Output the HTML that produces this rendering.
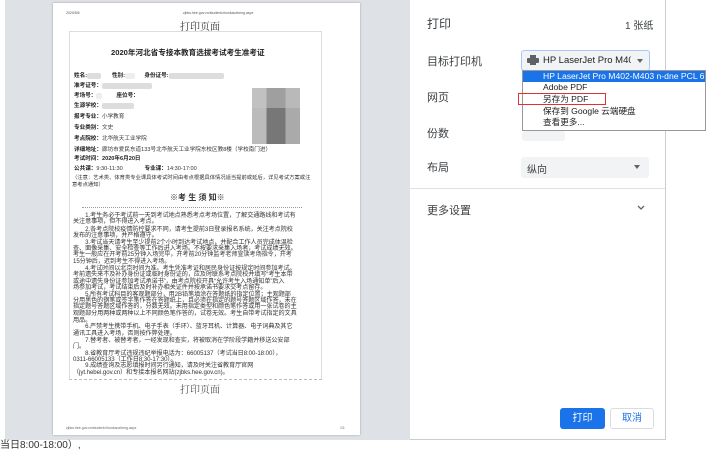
<!DOCTYPE html>
<html><head><meta charset="utf-8"><style>
*{margin:0;padding:0;box-sizing:border-box}
body{width:720px;height:445px;overflow:hidden;background:#fff;position:relative;font-family:"Liberation Sans","Noto Sans CJK SC",sans-serif;color:#202124}
.a{position:absolute;white-space:nowrap}
#gray{left:5px;top:0;width:405px;height:440px;background:#dee1e6}
#page{left:53px;top:3px;width:307px;height:432px;background:#fff;box-shadow:0 0 2px rgba(0,0,0,.3)}
.doc{font-family:"Liberation Serif","Noto Serif CJK SC",serif}
.l{position:absolute;left:73px;font-size:6.1px;line-height:6.5px;color:#333;white-space:nowrap;letter-spacing:-0.05px}
.f{position:absolute;left:74px;font-size:5.6px;color:#333;white-space:nowrap}
.f b{color:#222}
.blur{display:inline-block;background:#ddd;height:6px;vertical-align:middle;border-radius:2px}
#panel{left:410px;top:0;width:256px;height:440px;background:#fff;border-right:1px solid #ccc;border-bottom:1px solid #ccc}
.lab{position:absolute;left:427px;font-size:11px;color:#3c4043}
.sel{position:absolute;background:#f1f3f4;border-radius:3px}
.it{position:absolute;left:543px;font-size:8.6px;line-height:11px;color:#202124}
</style></head><body>
<div id="gray" class="a"></div>
<div id="page" class="a"></div>
<div class="a" style="left:66px;top:11px;font-size:3.5px;color:#555">2020/5/6</div>
<div class="a" style="left:183px;top:11px;font-size:3.5px;color:#555">zjbks.hee.gov.cn/student/zhunkaozheng.aspx</div>
<div class="a doc" style="left:180px;top:18px;font-size:10px;color:#333">打印页面</div>
<div class="a" style="left:69px;top:31px;width:253px;height:349px;border:1px solid #ddd;border-bottom:1px dashed #bbb"></div>
<div class="a" style="left:111px;top:47px;font-size:7.6px;font-weight:bold;color:#222">2020年河北省专接本教育选拔考试考生准考证</div>
<div class="f" style="top:71px"><b>姓名:</b><span class="blur" style="width:14px"></span>&nbsp;&nbsp;&nbsp;&nbsp;&nbsp;&nbsp;&nbsp;<b>性别:</b><span class="blur" style="width:10px;background:#eee"></span>&nbsp;&nbsp;&nbsp;&nbsp;&nbsp;&nbsp;<b>身份证号:</b><span class="blur" style="width:55px"></span></div>
<div class="f" style="top:81px"><b>准考证号：</b><span class="blur" style="width:50px"></span></div>
<div class="f" style="top:91px"><b>考场号：</b><span class="blur" style="width:6px;background:#eee"></span>&nbsp;&nbsp;&nbsp;&nbsp;&nbsp;&nbsp;&nbsp;&nbsp;&nbsp;<b>座位号：</b></div>
<div class="f" style="top:101px"><b>生源学校：</b><span class="blur" style="width:32px"></span></div>
<div class="f" style="top:112px"><b>报考专业：</b>小学教育</div>
<div class="f" style="top:123px"><b>专业类别：</b>文史</div>
<div class="f" style="top:134px"><b>考点院校：</b>北华航天工业学院</div>
<div class="f" style="top:145px"><b>详细地址：</b>廊坊市爱民东道133号北华航天工业学院东校区教8楼（学校南门进）</div>
<div class="f" style="top:154px"><b>考试时间：2020年6月20日</b></div>
<div class="f" style="top:164px"><b>公共课：</b>9:30-11:30&nbsp;&nbsp;&nbsp;&nbsp;&nbsp;&nbsp;&nbsp;&nbsp;&nbsp;&nbsp;&nbsp;&nbsp;&nbsp;&nbsp;<b>专业课：</b>14:30-17:00</div>
<div class="f" style="top:173px;left:72px;font-size:5.3px">（注意：艺术类、体育类专业课具体考试时间由考点根据具体情况适当提前或延后，详见考试方案或注</div>
<div class="f" style="top:180px;left:72px;font-size:5.3px">意考点通知）</div>
<div class="a" style="left:252px;top:88px;width:48px;height:56px;background:linear-gradient(90deg,#bbb 0 30%,#777 30% 70%,#aaa 70%)"></div>
<div class="a" style="left:252px;top:88px;width:48px;height:20px;background:rgba(200,200,200,.5)"></div>
<div class="a" style="left:170px;top:192px;font-size:8px;font-weight:bold;color:#333">※考 生 须 知※</div>
<div class="a" style="left:82px;top:207px;width:220px;border-top:1px dotted #999"></div>
<div class="l" style="top:213px">　　1.考生务必于考试前一天到考试地点熟悉考点考场位置，了解交通路线和考试有</div>
<div class="l" style="top:219px">关注意事项，但不得进入考点。</div>
<div class="l" style="top:227px">　　2.各考点院校疫情防控要求不同，请考生提前3日登录报名系统，关注考点院校</div>
<div class="l" style="top:233px">发布的注意事项，并严格遵守。</div>
<div class="l" style="top:240px">　　3.考试当天请考生至少提前2个小时到达考试地点，并配合工作人员完成体温检</div>
<div class="l" style="top:246px">查、面像采集、安全检查等工作后进入考场。不按要求采集入场者，考试成绩无效。</div>
<div class="l" style="top:252px">考生一般应在开考前25分钟入场完毕，开考前20分钟监考老师宣读考场指令，开考</div>
<div class="l" style="top:259px">15分钟后，迟到考生不得进入考场。</div>
<div class="l" style="top:266px">　　4.考试时间以北京时间为准。考生凭准考证和居民身份证按规定时间参加考试。</div>
<div class="l" style="top:272px">考前遗失来不及补办身份证或临时身份证的，应及时联系考点院校并填写“考生本带</div>
<div class="l" style="top:279px">或途中遗失身份证参加考试承诺书”，由考点院校开具“允许考生入场通知单”后入</div>
<div class="l" style="top:285px">场参加考试，考试结束后及时补办相关证件并按承诺书要求交考点留存。</div>
<div class="l" style="top:292px">　　5.所有考试科目的客观题部分，用2B铅笔填涂在答题纸的指定位置；主观题部</div>
<div class="l" style="top:298px">分用黑色的钢笔或签字笔作答在答题纸上，且必须在指定的题号答题区域作答，未在</div>
<div class="l" style="top:304px">指定题号答题区域作答的，分数无效。未用指定类型和颜色笔作答或用一张试卷的主</div>
<div class="l" style="top:311px">观题部分用两种或两种以上不同颜色笔作答的，试卷无效。考生自带考试指定的文具</div>
<div class="l" style="top:318px">用品。</div>
<div class="l" style="top:324px">　　6.严禁考生携带手机、电子手表（手环）、蓝牙耳机、计算器、电子词典及其它</div>
<div class="l" style="top:331px">通讯工具进入考场，否则按作弊处理。</div>
<div class="l" style="top:338px">　　7.替考者、被替考者，一经发现和查实，将被取消在学阶段学籍并移送公安部</div>
<div class="l" style="top:344px">门。</div>
<div class="l" style="top:351px">　　8.省教育厅考试违规违纪举报电话为：66005137（考试当日8:00-18:00），</div>
<div class="l" style="top:357px">0311-66005133（工作日8:30-17:30）。</div>
<div class="l" style="top:363px">　　9.成绩查询及志愿填报时间另行通知，请及时关注省教育厅官网</div>
<div class="l" style="top:370px">（jyt.hebei.gov.cn）和专接本报名网站(zjbks.hee.gov.cn)。</div>
<div class="a doc" style="left:180px;top:381px;font-size:10px;color:#555">打印页面</div>
<div class="a" style="left:66px;top:426px;font-size:3.5px;color:#666">zjbks.hee.gov.cn/student/zhunkaozheng.aspx</div>
<div class="a" style="left:340px;top:426px;font-size:3.5px;color:#666">1/1</div>
<div class="a" style="left:0;top:436px;font-size:10px;color:#333">当日8:00-18:00）,</div>

<div id="panel" class="a"></div>
<div class="lab" style="top:15px;font-size:12px">打印</div>
<div class="a" style="left:625px;top:17px;font-size:10px;color:#3c4043">1 张纸</div>
<div class="lab" style="top:53px">目标打印机</div>
<div class="a" style="left:521px;top:50px;width:129px;height:21px;border:1px solid #a8c7fa;border-radius:3px;background:#f1f3f4"></div>
<svg class="a" style="left:527px;top:55px" width="12" height="11" viewBox="0 0 12 11"><rect x="3" y="0" width="6" height="3" fill="#5f6368"/><rect x="0" y="3" width="12" height="5" rx="1" fill="#5f6368"/><rect x="3" y="7" width="6" height="3" fill="#5f6368"/></svg>
<div class="a" style="left:543px;top:55px;width:88px;overflow:hidden;font-size:9.5px;color:#202124">HP LaserJet Pro M402-M403</div>
<div class="a" style="left:637px;top:59px;border:3px solid transparent;border-top:4px solid #5f6368"></div>
<div class="a" style="left:522px;top:70px;width:184px;height:61px;background:#fff;border:1px solid #999"></div>
<div class="a" style="left:523px;top:71px;width:182px;height:11px;background:#1a73e8"></div>
<div class="it" style="top:71px;color:#fff">HP LaserJet Pro M402-M403 n-dne PCL 6</div>
<div class="it" style="top:82px">Adobe PDF</div>
<div class="it" style="top:94px">另存为 PDF</div>
<div class="a" style="left:518px;top:93px;width:88px;height:12px;border:1.5px solid #e03030"></div>
<div class="it" style="top:106px">保存到 Google 云端硬盘</div>
<div class="it" style="top:117px">查看更多...</div>
<div class="lab" style="top:89px">网页</div>
<div class="lab" style="top:125px">份数</div>
<div class="sel" style="left:522px;top:131px;width:43px;height:10px"></div>
<div class="lab" style="top:159px">布局</div>
<div class="sel" style="left:521px;top:157px;width:128px;height:21px"></div>
<div class="a" style="left:527px;top:161px;font-size:10px;color:#3c4043">纵向</div>
<div class="a" style="left:634px;top:165px;border:3px solid transparent;border-top:4px solid #5f6368"></div>
<div class="a" style="left:410px;top:188px;width:255px;border-top:1px solid #e0e0e0"></div>
<div class="lab" style="top:202px">更多设置</div>
<svg class="a" style="left:637px;top:205px" width="8" height="6" viewBox="0 0 8 6"><path d="M1 1l3 3 3-3" stroke="#5f6368" stroke-width="1.3" fill="none"/></svg>
<div class="a" style="left:560px;top:408px;width:45px;height:21px;background:#1a73e8;border-radius:3px;color:#fff;font-size:10px;text-align:center;line-height:21px">打印</div>
<div class="a" style="left:610px;top:408px;width:44px;height:21px;border:1px solid #dadce0;border-radius:3px;color:#1a73e8;font-size:10px;text-align:center;line-height:19px">取消</div>
</body></html>
